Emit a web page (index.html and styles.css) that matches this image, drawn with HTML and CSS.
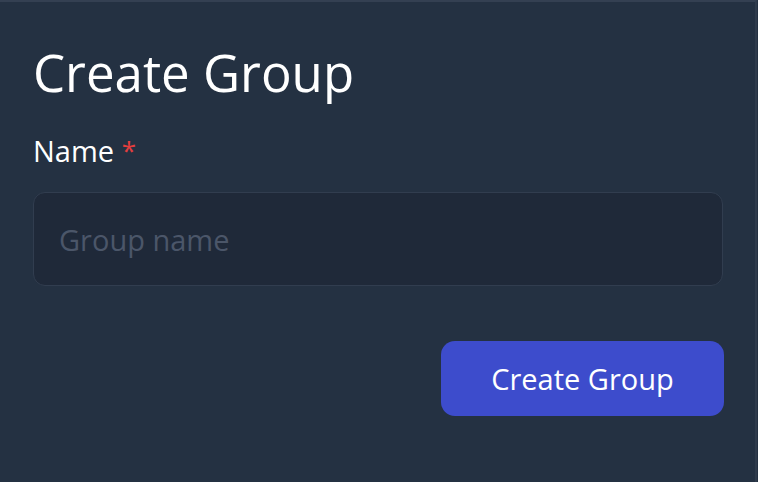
FILE: index.html
```html
<!DOCTYPE html>
<html>
<head>
<meta charset="utf-8">
<link rel="stylesheet" href="styles.css">
</head>
<body>
<div class="card">
  <h1 class="title">Create Group</h1>
  <label class="label" for="name">Name <span class="req">*</span></label>
  <input class="input" id="name" type="text" placeholder="Group name">
  <div class="actions">
    <button class="btn" type="button">Create Group</button>
  </div>
</div>
</body>
</html>
```
FILE: styles.css
```css
html, body {
  margin: 0;
  padding: 0;
  background: #243142;
  height: 100%;
}
body {
  font-family: "Open Sans", Lato, sans-serif;
  color: #ffffff;
}
.card {
  box-sizing: border-box;
  width: 757px;
  height: 482px;
  border-top: 2px solid #344052;
  border-right: 2px solid #2f3b4c;
  padding: 40px 32px 0 33px;
  display: flex;
  flex-direction: column;
}
.title {
  margin: 0;
  font-weight: 400;
  font-size: 51px;
  line-height: 60px;
}
.label {
  display: block;
  height: 36px;
  margin-top: 31px;
  font-size: 29px;
  line-height: 36px;
}
.req {
  color: #e53e3e;
  font-size: 26px;
  line-height: 0;
  vertical-align: 2px;
}
.input {
  margin-top: 23px;
  box-sizing: border-box;
  width: 690px;
  height: 94px;
  border: 1px solid #313d4f;
  border-radius: 12px;
  background: #1f2939;
  padding: 0 25px;
  font-family: inherit;
  font-size: 29px;
  color: #fff;
  outline: none;
}
.input::placeholder {
  color: #4b5669;
}
.actions {
  display: flex;
  justify-content: flex-end;
  margin-top: 55px;
  margin-right: -1px;
}
.btn {
  width: 283px;
  height: 75px;
  border: none;
  border-radius: 14px;
  background: #3d4ccc;
  color: #fff;
  font-family: inherit;
  font-size: 29px;
  padding: 0;
}
```
